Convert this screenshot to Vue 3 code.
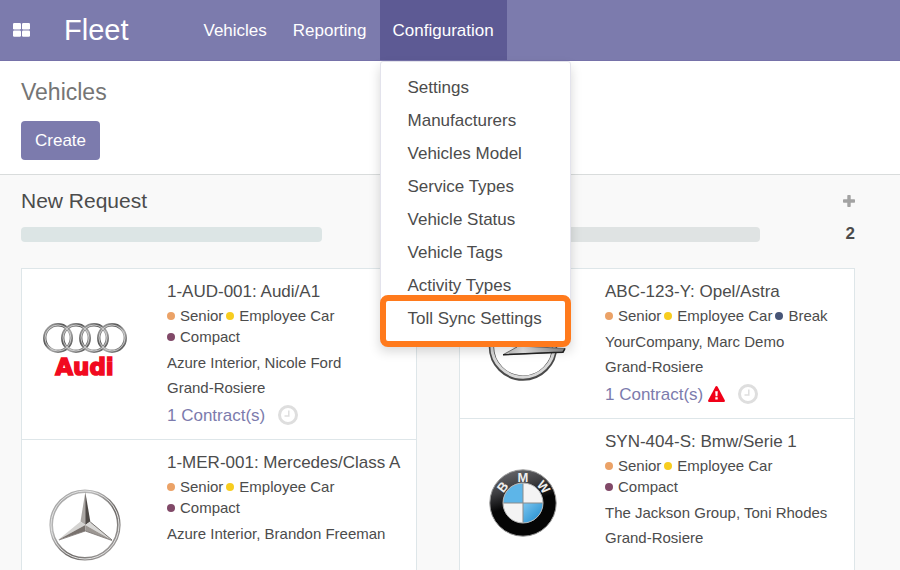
<script setup>
import { ref } from 'vue'

const menuOpen = ref(true)

const menuItems = [
  'Settings',
  'Manufacturers',
  'Vehicles Model',
  'Service Types',
  'Vehicle Status',
  'Vehicle Tags',
  'Activity Types',
  'Toll Sync Settings',
]

const senior = { name: 'Senior', tone: 'orange' }
const employee = { name: 'Employee Car', tone: 'yellow' }
const compact = { name: 'Compact', tone: 'plum' }
const breakTag = { name: 'Break', tone: 'navy' }

const columns = [
  {
    id: 'new',
    title: 'New Request',
    cards: [
      {
        logo: 'audi',
        title: '1-AUD-001: Audi/A1',
        tags: [senior, employee, compact],
        driver: 'Azure Interior, Nicole Ford',
        place: 'Grand-Rosiere',
        contracts: '1 Contract(s)',
      },
      {
        logo: 'mercedes',
        title: '1-MER-001: Mercedes/Class A',
        tags: [senior, employee, compact],
        driver: 'Azure Interior, Brandon Freeman',
      },
    ],
  },
  {
    id: 'registered',
    title: '',
    count: 2,
    cards: [
      {
        logo: 'opel',
        title: 'ABC-123-Y: Opel/Astra',
        tags: [senior, employee, breakTag],
        driver: 'YourCompany, Marc Demo',
        place: 'Grand-Rosiere',
        contracts: '1 Contract(s)',
        warning: true,
      },
      {
        logo: 'bmw',
        title: 'SYN-404-S: Bmw/Serie 1',
        tags: [senior, employee, compact],
        driver: 'The Jackson Group, Toni Rhodes',
        place: 'Grand-Rosiere',
      },
    ],
  },
]
</script>

<template>
  <div class="app">
    <header class="navbar">
      <button class="apps" type="button" aria-label="Apps">
        <svg width="17" height="14" viewBox="0 0 17 14" fill="#fff">
          <rect x="0" y="0" width="8" height="6.4" rx="1.2" />
          <rect x="9" y="0" width="8" height="6.4" rx="1.2" />
          <rect x="0" y="7.4" width="8" height="6.4" rx="1.2" />
          <rect x="9" y="7.4" width="8" height="6.4" rx="1.2" />
        </svg>
      </button>
      <a class="brand" href="#">Fleet</a>
      <nav class="sections">
        <a class="section" href="#">Vehicles</a>
        <a class="section" href="#">Reporting</a>
        <div class="dropdown">
          <button
            class="section"
            :class="{ active: menuOpen }"
            type="button"
            :aria-expanded="menuOpen"
            @click="menuOpen = !menuOpen"
          >Configuration</button>
          <ul v-if="menuOpen" class="menu">
            <li v-for="item in menuItems" :key="item">
              <a href="#">{{ item }}</a>
            </li>
          </ul>
        </div>
      </nav>
    </header>

    <section class="control">
      <h1>Vehicles</h1>
      <button class="create" type="button">Create</button>
    </section>

    <main class="board">
      <section v-for="col in columns" :key="col.id" class="column">
        <div class="column-head">
          <h2>{{ col.title }}</h2>
          <button v-if="col.count" class="add" type="button" aria-label="Add">
            <svg width="12" height="12" viewBox="0 0 12 12" fill="#a3a3a3">
              <path d="M5 0h2q.7 0 .7.7v3.6h3.6q.7 0 .7.7v2q0 .7-.7.7H7.700v3.600q0 .7-.7.7H5q-.7 0-.7-.7V7.700H.7Q0 7.700 0 7V5q0-.7.7-.7h3.600V.7Q4.300 0 5 0z" />
            </svg>
          </button>
        </div>
        <div class="progress-row">
          <div class="progress" :class="{ grey: col.count }"></div>
          <strong class="count">{{ col.count }}</strong>
        </div>

        <div class="cards">
          <article v-for="card in col.cards" :key="card.title" class="card">
            <div class="logo">
              <svg v-if="card.logo === 'audi'" width="100" height="100" viewBox="0 0 100 100">
                <defs>
                  <linearGradient id="ring" x1="0" y1="0" x2="1" y2="1">
                    <stop offset="0" stop-color="#b5b5b5" />
                    <stop offset=".35" stop-color="#555" />
                    <stop offset=".6" stop-color="#aaa" />
                    <stop offset="1" stop-color="#444" />
                  </linearGradient>
                </defs>
                <g fill="none">
                  <g stroke="url(#ring)" stroke-width="3.400">
                    <circle v-for="x in [23, 41, 59, 77]" :key="x" :cx="x" cy="35" r="13.300" />
                  </g>
                  <g stroke="#ddd" stroke-width=".8">
                    <circle v-for="x in [23, 41, 59, 77]" :key="x" :cx="x" cy="35" r="13" />
                  </g>
                </g>
                <text class="audi-name" x="49.500" y="72" text-anchor="middle">Audi</text>
              </svg>

              <svg v-else-if="card.logo === 'mercedes'" width="100" height="100" viewBox="0 0 100 100">
                <defs>
                  <linearGradient id="merc" x1="0" y1="0" x2="1" y2="1">
                    <stop offset="0" stop-color="#9a9a9a" />
                    <stop offset=".3" stop-color="#b9b9b9" />
                    <stop offset=".62" stop-color="#6d6967" />
                    <stop offset="1" stop-color="#b5b3b2" />
                  </linearGradient>
                </defs>
                <circle cx="50" cy="51" r="33.800" fill="none" stroke="url(#merc)" stroke-width="3.600" />
                <circle cx="50" cy="51" r="34" fill="none" stroke="#e2e2e2" stroke-width="1" />
                <path d="M50.300 18L45.500 47.500 50.300 51z" fill="#aaa6a3" />
                <path d="M50.300 18L55.300 47.500 50.300 51z" fill="#4d4845" />
                <path d="M23 66L45.500 47.500 50.300 51z" fill="#d5d4d2" />
                <path d="M23 66L50.300 57V51z" fill="#78716d" />
                <path d="M77.500 66.500L55.300 47.500 50.300 51z" fill="#d9d8d6" />
                <path d="M77.500 66.500L50.300 57V51z" fill="#9c9793" />
                <path d="M24 66L50.300 57 77 66.500" fill="none" stroke="#77716e" stroke-width=".8" />
                <path d="M55.300 48L77 66" stroke="#5c5754" stroke-width=".8" />
              </svg>

              <svg v-else-if="card.logo === 'opel'" width="100" height="100" viewBox="0 0 100 100">
                <defs>
                  <linearGradient id="bolt" x1="0" y1="0" x2="1" y2="0">
                    <stop offset="0" stop-color="#777" />
                    <stop offset=".5" stop-color="#e8e8e8" />
                    <stop offset="1" stop-color="#888" />
                  </linearGradient>
                </defs>
                <g fill="none">
                  <circle cx="50" cy="43.500" r="31.600" stroke="#4a4a4a" stroke-width="5.400" />
                  <circle cx="50" cy="43" r="31.200" stroke="#d8d8d8" stroke-width="3" />
                </g>
                <path d="M8 41L70 36 56 43.500 92 45.500 90 49.200 30 51.700 44 44z" fill="url(#bolt)" stroke="#555" stroke-width=".8" />
                <path d="M30 51.700L81 49.500 90 49.200 92 45.500" fill="none" stroke="#222" stroke-width="1.500" />
              </svg>

              <svg v-else width="100" height="100" viewBox="0 0 100 100">
                <defs>
                  <linearGradient id="rim" x1=".2" y1="0" x2=".5" y2="1">
                    <stop offset="0" stop-color="#6b6b6f" />
                    <stop offset=".3" stop-color="#3d3d40" />
                    <stop offset=".55" stop-color="#050505" />
                  </linearGradient>
                  <linearGradient id="sky" x1="0" y1="0" x2="1" y2="1">
                    <stop offset="0" stop-color="#7cc6ef" />
                    <stop offset="1" stop-color="#1787cc" />
                  </linearGradient>
                </defs>
                <circle cx="50" cy="50" r="33.200" fill="url(#rim)" stroke="#9a9a9a" stroke-width="1" />
                <circle cx="50" cy="50" r="20" fill="#f4f4f4" />
                <path d="M50 50V30A20 20 0 0 0 30 50z" fill="#5db5e8" />
                <path d="M50 50V70A20 20 0 0 0 70 50z" fill="url(#sky)" />
                <path d="M50 30V70M30 50H70" stroke="#8b8b8b" stroke-width="1" />
                <circle cx="50" cy="50" r="20" fill="none" stroke="#b5b5b5" stroke-width="1" />
                <g class="bmw-name" text-anchor="middle">
                  <text x="50" y="28.500">M</text>
                  <text x="50" y="28.500" transform="rotate(-52 50 50)">B</text>
                  <text x="50" y="28.500" transform="rotate(52 50 50)">W</text>
                </g>
              </svg>
            </div>

            <div class="details">
              <h3>{{ card.title }}</h3>
              <ul class="tags">
                <li v-for="tag in card.tags" :key="tag.name">
                  <i class="dot" :class="tag.tone"></i>{{ tag.name }}
                </li>
              </ul>
              <p>{{ card.driver }}</p>
              <p v-if="card.place">{{ card.place }}</p>
              <div v-if="card.contracts" class="contracts">
                <a href="#">{{ card.contracts }}</a>
                <svg v-if="card.warning" class="warning" width="17" height="16" viewBox="0 0 17 16">
                  <path d="M8.500 0Q9.200 0 9.600.7L16.800 14.300Q17.300 16 15.800 16H1.200Q-.3 16 .2 14.300L7.400.7Q7.800 0 8.500 0z" fill="#f00018" />
                  <path d="M7.200 5.200h2.600l-.4 5H7.600zM7.300 11.300h2.400v2.300H7.300z" fill="#fff" />
                </svg>
                <button class="clock" type="button" aria-label="Schedule activity">
                  <svg width="20" height="20" viewBox="0 0 20 20" fill="none" stroke="#dedede">
                    <circle cx="10" cy="10" r="8.500" stroke-width="3" />
                    <path d="M10.800 5.500V11H6.500" stroke-width="1.500" />
                  </svg>
                </button>
              </div>
            </div>
          </article>
        </div>
      </section>
    </main>
  </div>
</template>

<style>
body {
  background: #f9f9f9;
}
</style>

<style scoped>
.app {
  height: 100vh;
  overflow: hidden;
  display: flex;
  flex-direction: column;
  font-family: "Liberation Sans", Arial, sans-serif;
  font-size: 17px;
  color: #4c4c4c;
  background: #f9f9f9;
}

h1, h2, h3, p, ul {
  margin: 0;
  padding: 0;
  font-weight: normal;
}

ul {
  list-style: none;
}

a {
  color: inherit;
  text-decoration: none;
}

button {
  border: 0;
  padding: 0;
  background: none;
  font: inherit;
  color: inherit;
  cursor: pointer;
}

svg {
  display: block;
  flex: none;
}

.navbar {
  flex: none;
  display: flex;
  align-items: center;
  height: 60px;
  padding-left: 13px;
  background: #7c7bad;
  border-bottom: 1px solid #7672a9;
  color: #fff;
}

.brand {
  margin: 0 62px 0 34px;
  font-size: 29px;
}

.sections {
  display: flex;
  align-self: stretch;
}

.section {
  display: flex;
  align-items: center;
  box-sizing: border-box;
  height: 60px;
  padding: 2px 13px 0;
}

.section.active {
  background: #5d5a94;
}

.dropdown {
  position: relative;
}

.menu {
  position: absolute;
  z-index: 10;
  top: 61px;
  left: 0;
  box-sizing: border-box;
  width: 191px;
  padding: 9px 0;
  background: #fff;
  border: 1px solid #e3e3ec;
  border-radius: 3px;
  box-shadow: 0 6px 12px rgba(0, 0, 0, 0.16);
  color: #4c4c4c;
  line-height: 33px;
}

.menu a {
  display: block;
  padding-left: 27px;
}

.menu li:last-child::after {
  content: "";
  position: absolute;
  box-sizing: border-box;
  left: -1px;
  right: -1px;
  bottom: -3px;
  height: 52px;
  border: 6px solid #ff7a1c;
  border-radius: 8px;
  pointer-events: none;
}

.control {
  flex: none;
  display: flex;
  flex-direction: column;
  align-items: flex-start;
  gap: 14px;
  padding: 16px 21px 14px;
  background: #fff;
  border-bottom: 1px solid #d9dcdc;
}

h1 {
  font-size: 23px;
  line-height: 30px;
  color: #757575;
}

.create {
  height: 39px;
  padding: 0 14px;
  border-radius: 4px;
  background: #7c7bad;
  color: #fff;
}

.board {
  flex: 1;
  display: grid;
  grid-template-columns: 1fr 1fr;
  padding-right: 24px;
}

.column {
  display: flex;
  flex-direction: column;
  padding: 12px 21px 0;
}

.column-head {
  display: flex;
  align-items: center;
  justify-content: space-between;
  height: 28px;
}

h2 {
  font-size: 21px;
}

.progress-row {
  display: flex;
  align-items: center;
  height: 20px;
  margin: 9px 0 24px;
}

.progress {
  flex: 0 0 76%;
  height: 15px;
  border-radius: 4px;
  background: #dce5e5;
}

.progress.grey {
  background: #dfe3e3;
}

.count {
  margin-left: auto;
}

.card {
  display: flex;
  border: 1px solid #dee6e9;
  background: #fff;
}

.card + .card {
  min-height: 170px;
  border-top: 0;
}

.logo {
  flex: 0 0 126px;
  display: flex;
  justify-content: center;
  align-items: flex-start;
  height: 134px;
  padding-top: 34px;
  box-sizing: border-box;
}

.audi-name {
  font: bold 23px "DejaVu Sans", sans-serif;
  fill: #f10a20;
  stroke: #f10a20;
  stroke-width: 1.5px;
}

.bmw-name {
  font: bold 13px "Liberation Sans", sans-serif;
  fill: #eee;
}

.details {
  flex: 1;
  padding: 10px 12px 9px 19px;
  font-size: 15px;
  line-height: 25px;
}

h3 {
  font-size: 17px;
  line-height: 26px;
  white-space: nowrap;
}

.tags {
  display: flex;
  flex-wrap: wrap;
  column-gap: 3px;
  margin-bottom: 3px;
  line-height: 21px;
}

.tags li {
  display: flex;
  align-items: center;
  gap: 5px;
}

.dot {
  width: 8px;
  height: 8px;
  border-radius: 50%;
}

.dot.orange {
  background: #eba267;
}

.dot.yellow {
  background: #f7cd1f;
}

.dot.plum {
  background: #814968;
}

.dot.navy {
  background: #475577;
}

.contracts {
  display: flex;
  align-items: center;
  height: 30px;
  font-size: 17px;
  color: #7c7bad;
}

.warning {
  margin-left: 5px;
}

.clock {
  margin-left: 13px;
}
</style>
